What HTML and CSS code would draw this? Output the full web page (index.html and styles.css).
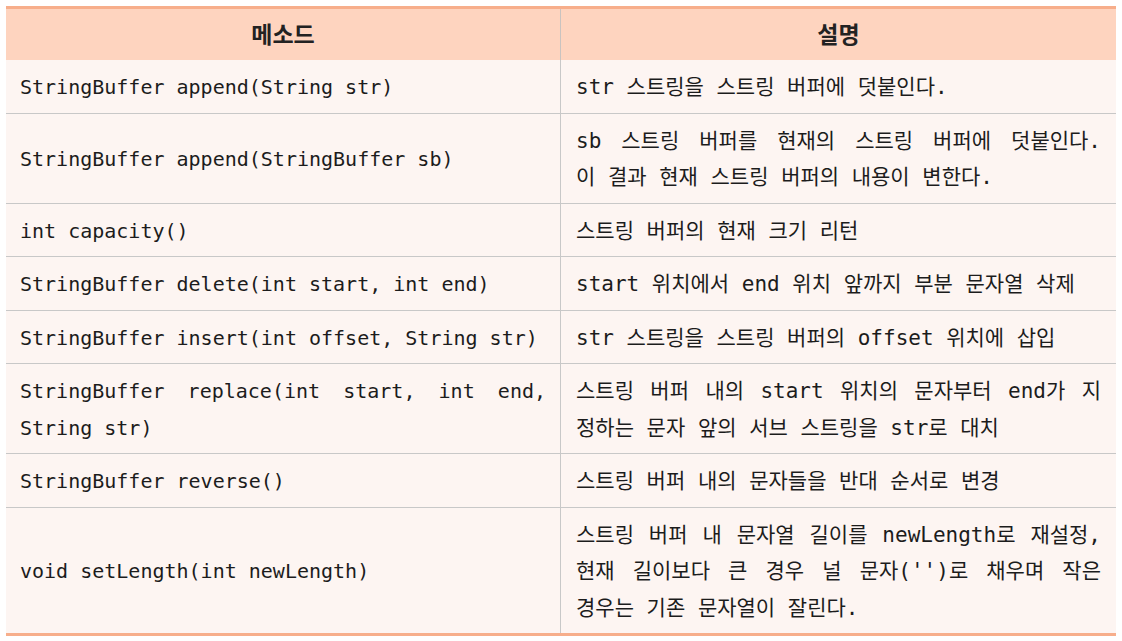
FILE: index.html
```html
<!DOCTYPE html>
<html lang="ko">
<head>
<meta charset="utf-8">
<link rel="stylesheet" href="styles.css">
</head>
<body>
<table class="api">
  <thead>
    <tr><th class="c-method">메소드</th><th class="c-desc">설명</th></tr>
  </thead>
  <tbody>
    <tr><td>StringBuffer append(String str)</td><td>str 스트링을 스트링 버퍼에 덧붙인다.</td></tr>
    <tr><td>StringBuffer append(StringBuffer sb)</td><td><span class="ln j">sb 스트링 버퍼를 현재의 스트링 버퍼에 덧붙인다.</span><span class="ln">이 결과 현재 스트링 버퍼의 내용이 변한다.</span></td></tr>
    <tr><td>int capacity()</td><td>스트링 버퍼의 현재 크기 리턴</td></tr>
    <tr><td>StringBuffer delete(int start, int end)</td><td>start 위치에서 end 위치 앞까지 부분 문자열 삭제</td></tr>
    <tr><td>StringBuffer insert(int offset, String str)</td><td>str 스트링을 스트링 버퍼의 offset 위치에 삽입</td></tr>
    <tr><td><span class="ln j">StringBuffer replace(int start, int end,</span><span class="ln">String str)</span></td><td><span class="ln j">스트링 버퍼 내의 start 위치의 문자부터 end가 지</span><span class="ln">정하는 문자 앞의 서브 스트링을 str로 대치</span></td></tr>
    <tr><td>StringBuffer reverse()</td><td>스트링 버퍼 내의 문자들을 반대 순서로 변경</td></tr>
    <tr><td>void setLength(int newLength)</td><td><span class="ln j">스트링 버퍼 내 문자열 길이를 newLength로 재설정,</span><span class="ln j">현재 길이보다 큰 경우 널 문자('')로 채우며 작은</span><span class="ln">경우는 기존 문자열이 잘린다.</span></td></tr>
  </tbody>
</table>
</body>
</html>
```
FILE: styles.css
```css
html, body {
  margin: 0;
  padding: 0;
  background: #ffffff;
}
body {
  padding: 6px 6px 0 6px;
  font-family: "DejaVu Sans Mono", "Noto Sans CJK KR", monospace;
  color: #1c1c1c;
}
.api {
  width: 1110px;
  border-collapse: collapse;
  table-layout: fixed;
  border-top: 3px solid #f7ae8b;
  border-bottom: 3px solid #f7ae8b;
}
.api th {
  background: #fed4bf;
  height: 48px;
  padding: 0 0 3px 0;
  font-family: "Noto Sans CJK KR", sans-serif;
  font-weight: 700;
  font-size: 23px;
  line-height: 30px;
  color: #222222;
  text-align: center;
  vertical-align: middle;
}
.api th.c-method { width: 554px; border-right: 1px solid #c9c3c0; }
.api td {
  background: #fdf5f2;
  font-size: 20px;
  line-height: 36.5px;
  padding: 9px 14px 7px 14px;
  text-align: justify;
  vertical-align: middle;
  border-top: 1px solid #c8c8c8;
}
.api tbody tr:first-child td { border-top: none; }
.api td:first-child { border-right: 1px solid #c8c8c8; }
.api td + td {
  font-size: 21px;
  padding-left: 15px;
  padding-right: 15px;
}
.ln { display: block; }
.ln.j { text-align: justify; text-align-last: justify; }
```
